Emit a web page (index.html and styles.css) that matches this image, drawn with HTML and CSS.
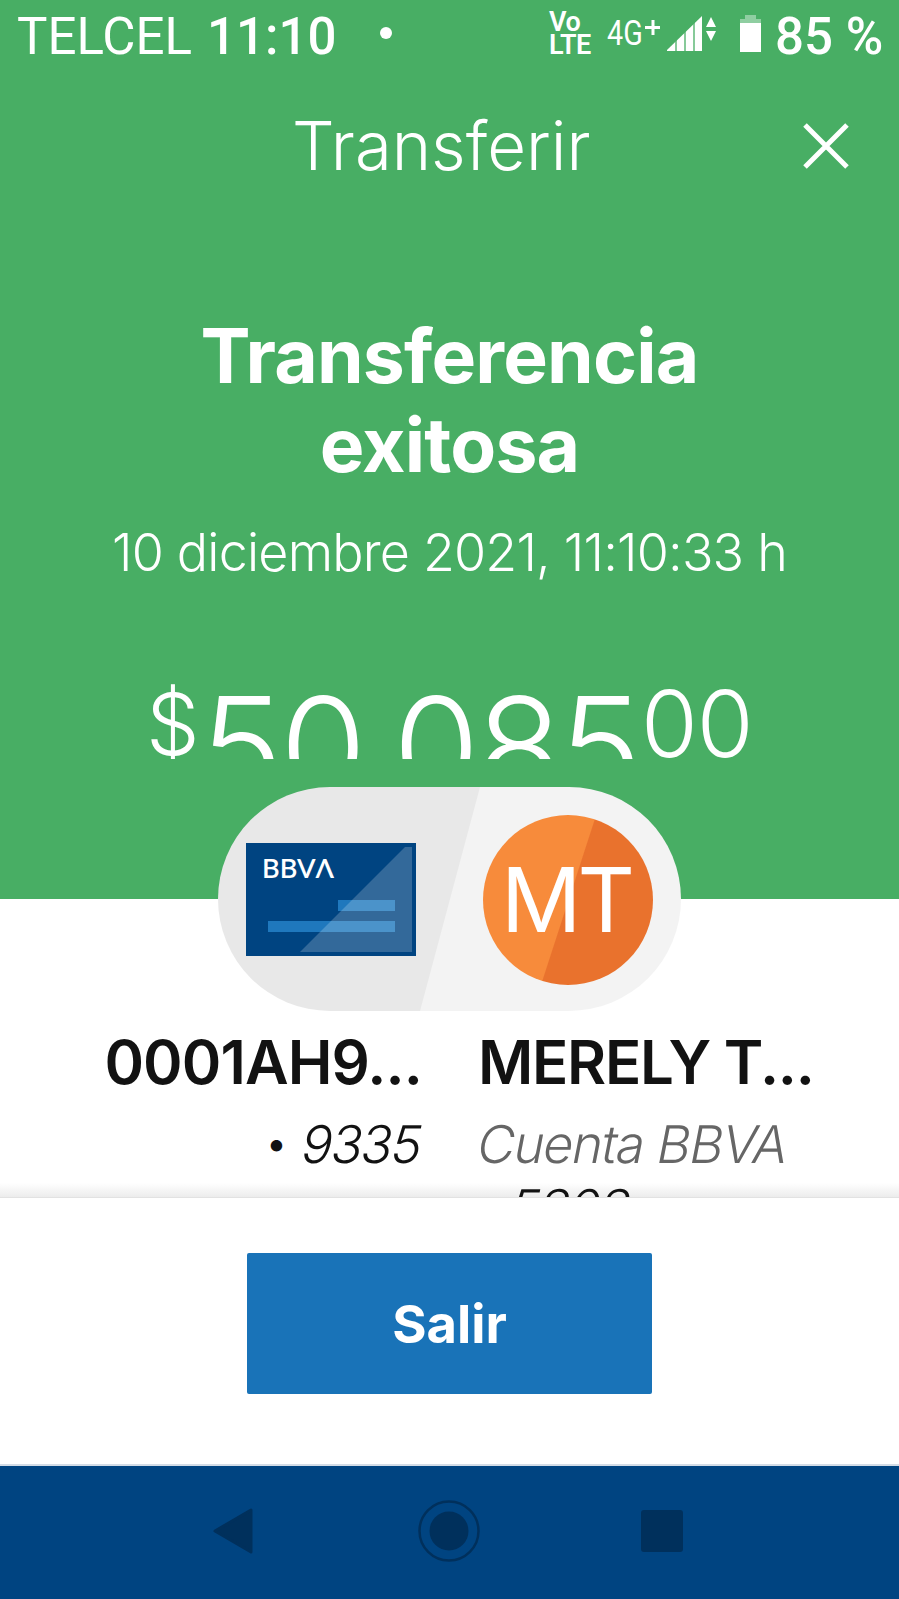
FILE: index.html
```html
<!DOCTYPE html>
<html lang="es">
<head>
  <meta charset="utf-8">
  <title>Transferir</title>
  <link rel="stylesheet" href="styles.css">
</head>
<body>
  <div class="hero">
    <div class="status-bar">
      <span class="carrier">TELCEL</span>
      <span class="clock">11:10</span>
      <span class="status-dot"></span>
      <span class="volte"><span>Vo</span><span>LTE</span></span>
      <span class="network">4G</span>
      <svg class="status-icons" width="116" height="54" viewBox="0 0 116 54">
        <path d="M8 20v15M0 27.5h15" stroke="#fff" stroke-width="3"/>
        <path d="M22 51V50L57 16V51Z" fill="#fff"/>
        <path d="M31 30v22M40 24v28M49 16v36" stroke="#48ae64" stroke-width="1.3"/>
        <path d="M61 27l5-10 5 10zM61 31h10l-5 10z" fill="#fff"/>
        <path d="M95 23v-4h5v-4h11v4h5v4z" fill="#8fcea1"/>
        <path d="M95 23h21v29h-21z" fill="#fff"/>
      </svg>
      <span class="battery">85 %</span>
    </div>

    <div class="header">
      <h1>Transferir</h1>
      <svg class="close" width="46" height="46" viewBox="0 0 46 46">
        <path d="M2 2l42 42M44 2L2 44" stroke="#fff" stroke-width="5"/>
      </svg>
    </div>

    <h2>Transferencia<br>exitosa</h2>
    <p class="date">10 diciembre 2021, 11:10:33 h</p>

    <div class="amount">
      <span class="currency">$</span>
      <span class="whole">50,085</span>
      <span class="cents">00</span>
    </div>
  </div>

  <div class="pill">
    <svg class="card" width="170" height="113" viewBox="0 0 170 113">
      <rect width="170" height="113" fill="#004481"/>
      <text class="logo" x="16" y="35" textLength="72" lengthAdjust="spacingAndGlyphs">BBVΛ</text>
      <rect x="92" y="57" width="57" height="11" fill="#1f78bd"/>
      <rect x="22" y="78" width="127" height="11" fill="#1f78bd"/>
      <path d="M54 109L159 4H166V109Z" fill="#fff" fill-opacity=".2"/>
    </svg>
    <div class="avatar">MT</div>
  </div>

  <div class="accounts">
    <div class="account from">
      <p class="name">0001AH9...</p>
      <p class="number"><span class="bullet">•</span> 9335</p>
    </div>
    <div class="account to">
      <p class="name">MERELY T...</p>
      <p class="bank">Cuenta BBVA</p>
      <p class="number"><span class="bullet">•</span> 5303</p>
    </div>
  </div>

  <div class="footer">
    <button class="exit">Salir</button>
  </div>

  <div class="nav-bar">
    <svg width="40" height="46" viewBox="0 0 40 46">
      <path d="M2 23L38 2V44Z" fill="#00305c" stroke="#00305c" stroke-width="3" stroke-linejoin="round"/>
    </svg>
    <svg class="home" width="62" height="62" viewBox="0 0 62 62">
      <circle cx="31" cy="31" r="29.5" fill="none" stroke="#00305c" stroke-width="2.5"/>
      <circle cx="31" cy="31" r="19.5" fill="#00305c"/>
    </svg>
    <svg width="42" height="42" viewBox="0 0 42 42">
      <rect width="42" height="42" rx="3" fill="#00305c"/>
    </svg>
  </div>
</body>
</html>
```
FILE: styles.css
```css
* {
  box-sizing: border-box;
}

body {
  margin: 0;
  width: 899px;
  height: 1599px;
  overflow: hidden;
  background: #fff;
  font-family: Inter, "Liberation Sans", sans-serif;
  color: #121212;
}

h1, h2, p {
  margin: 0;
}

.hero {
  height: 899px;
  background: #48ae64;
  color: #fff;
}

.status-bar {
  display: flex;
  height: 80px;
  padding-left: 17px;
  font-family: Roboto, sans-serif;
  font-size: 51px;
  line-height: 73px;
  white-space: nowrap;
}

.carrier {
  width: 190px;
}

.clock {
  width: 173px;
  font-weight: 500;
}

.status-dot {
  width: 12px;
  height: 12px;
  margin-top: 27px;
  border-radius: 50%;
  background: #fff;
}

.volte {
  display: flex;
  flex-direction: column;
  width: 58px;
  margin: 11px 0 0 157px;
  font-size: 27px;
  font-weight: 600;
  line-height: 23px;
  letter-spacing: -0.5px;
}

.network {
  width: 38px;
  font-size: 35px;
  line-height: 67px;
  transform: scaleX(0.82);
  transform-origin: left;
}

.status-icons {
  margin-right: 14px;
}

.battery {
  font-weight: 500;
}

.header {
  display: flex;
  justify-content: flex-end;
  padding: 24px 50px 0 0;
  height: 130px;
}

.header h1 {
  width: 300px;
  font-size: 67px;
  font-weight: 350;
  line-height: 84px;
  margin-right: 211px;
}

.close {
  margin-top: 19px;
}

h2 {
  margin-top: 101px;
  font-size: 75px;
  font-weight: 700;
  line-height: 89px;
  letter-spacing: -0.8px;
  text-align: center;
}

.date {
  margin-top: 32px;
  font-size: 52px;
  font-weight: 330;
  line-height: 63px;
  letter-spacing: -0.8px;
  text-align: center;
  white-space: nowrap;
}

.amount {
  display: flex;
  height: 99px;
  margin-top: 76px;
  padding-left: 146px;
  overflow: hidden;
  font-weight: 340;
}

.currency {
  width: 54px;
  font-size: 85px;
  font-weight: 300;
  line-height: 129px;
}

.whole {
  width: 441px;
  font-size: 140px;
  line-height: 174px;
  letter-spacing: -3px;
}

.cents {
  font-size: 92px;
  font-weight: 280;
  line-height: 128px;
  letter-spacing: -1px;
}

/* overlaps the green block and the white area */
.pill {
  position: relative;
  display: flex;
  align-items: center;
  justify-content: space-between;
  width: 463px;
  height: 224px;
  margin: -112px 0 0 218px;
  padding: 1px 28px 0;
  border-radius: 112px;
  background: linear-gradient(105deg, #e8e8e8 50%, #f3f3f3 50.2%);
}

.logo {
  font-family: Lato, sans-serif;
  font-size: 26px;
  font-weight: 600;
  fill: #fff;
}

.avatar {
  width: 170px;
  height: 170px;
  border-radius: 50%;
  background: linear-gradient(108deg, #f78b3b 50%, #e9722d 50.5%);
  color: #fff;
  font-size: 89px;
  font-weight: 380;
  line-height: 169px;
  letter-spacing: -4px;
  text-indent: -4px;
  text-align: center;
}

.accounts {
  display: flex;
  gap: 59px;
  height: 187px;
  padding: 20px 0 0 100px;
  overflow: hidden;
  white-space: nowrap;
  background: linear-gradient(to top, #ececec, #fff 14px);
  border-bottom: 1px solid #e2e2e2;
}

.account.from {
  width: 321px;
  text-align: right;
}

.name {
  margin-left: -2px;
  font-size: 60px;
  font-weight: 560;
  line-height: 63px;
  letter-spacing: -1.3px;
}

.from .name {
  margin-right: -1px;
  letter-spacing: -0.9px;
}

/* slanted upright letters, the italic face has a different "a" */
.number,
.bank {
  margin-top: 20px;
  font-size: 52px;
  font-weight: 300;
  line-height: 62px;
  letter-spacing: -1.6px;
  transform: skewX(-11deg);
}

.bullet {
  display: inline-block;
  margin-right: 1px;
  font-size: 50px;
  line-height: 50px;
  transform: translateY(-2px) skewX(11deg) scale(0.85);
}

.bank {
  margin-left: -2px;
  color: #666;
  letter-spacing: -1.2px;
}

.to .number {
  margin: 2px 0 0 -10px;
}

.footer {
  height: 268px;
  padding: 55px 247px 0;
  border-bottom: 2px solid #d3dce6;
}

.exit {
  display: block;
  width: 405px;
  height: 141px;
  border: 0;
  border-radius: 2px;
  background: #1973b8;
  color: #fff;
  font-family: inherit;
  font-size: 52.5px;
  font-weight: 700;
}

.nav-bar {
  display: flex;
  align-items: center;
  justify-content: space-between;
  height: 133px;
  padding: 0 216px 4px 213px;
  background: #004481;
}

.home {
  margin-left: 4px;
}
```
